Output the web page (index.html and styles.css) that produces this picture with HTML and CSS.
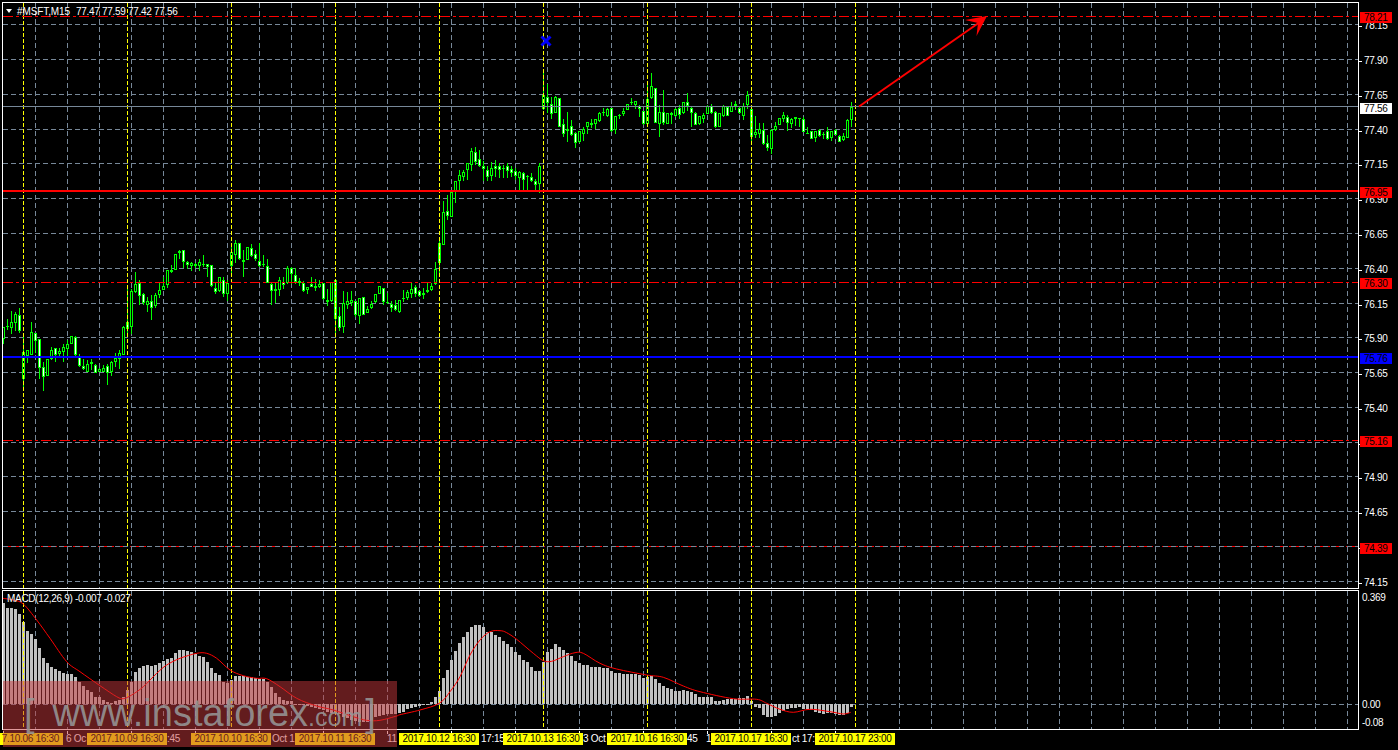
FILE: index.html
```html
<!DOCTYPE html>
<html lang="en">
<head>
<meta charset="utf-8">
<title>#MSFT,M15</title>
<link rel="stylesheet" href="styles.css">
</head>
<body>
<div class="terminal">
  <section class="pane pane-main">
    <svg id="main" class="plot" viewBox="3 3 1355 585" width="1355" height="585"></svg>
    <div class="title"><i class="caret"></i><span class="symbol">#MSFT,M15</span><span>77.47 77.59 77.42 77.56</span></div>
  </section>
  <aside class="axis">
    <span class="p" style="top:18px">78.15</span>
    <span class="p" style="top:53px">77.90</span>
    <span class="p" style="top:88px">77.65</span>
    <span class="p" style="top:123px">77.40</span>
    <span class="p" style="top:157px">77.15</span>
    <span class="p" style="top:192px">76.90</span>
    <span class="p" style="top:227px">76.65</span>
    <span class="p" style="top:262px">76.40</span>
    <span class="p" style="top:297px">76.15</span>
    <span class="p" style="top:331px">75.90</span>
    <span class="p" style="top:366px">75.65</span>
    <span class="p" style="top:401px">75.40</span>
    <span class="p" style="top:470px">74.90</span>
    <span class="p" style="top:505px">74.65</span>
    <span class="p" style="top:575px">74.15</span>
    <span class="tick" style="top:24px"></span>
    <span class="tick" style="top:442px"></span>
    <span class="tick" style="top:546px"></span>
    <span class="tag red" style="top:10px">78.21</span>
    <span class="tag white" style="top:101px">77.56</span>
    <span class="tag red" style="top:185px">76.95</span>
    <span class="tag red" style="top:276px">76.30</span>
    <span class="tag blue" style="top:351px">75.76</span>
    <span class="tag red" style="top:434px">75.16</span>
    <span class="tag red" style="top:541px">74.39</span>
  </aside>
  <section class="pane pane-macd">
    <svg id="macd" class="plot" viewBox="3 591 1355 138" width="1355" height="138"></svg>
    <div class="macd-title">MACD(12,26,9) -0.007 -0.027</div>
  </section>
  <aside class="axis">
    <span class="m" style="top:2px">0.369</span>
    <span class="m" style="top:109px">0.00</span>
    <span class="m" style="top:127px">-0.08</span>
  </aside>
  <footer class="time">
    <i class="mark-tick" style="left:3px"></i>
    <i class="mark-tick" style="left:67px"></i>
    <i class="mark-tick" style="left:131px"></i>
    <i class="mark-tick" style="left:195px"></i>
    <i class="mark-tick" style="left:259px"></i>
    <i class="mark-tick" style="left:323px"></i>
    <i class="mark-tick" style="left:387px"></i>
    <i class="mark-tick" style="left:451px"></i>
    <i class="mark-tick" style="left:515px"></i>
    <i class="mark-tick" style="left:579px"></i>
    <i class="mark-tick" style="left:643px"></i>
    <i class="mark-tick" style="left:707px"></i>
    <i class="mark-tick" style="left:771px"></i>
    <i class="mark-tick" style="left:835px"></i>
    <span class="t" style="left:66px">6 Oc</span>
    <span class="t" style="left:167px">:45</span>
    <span class="t" style="left:272px">Oct 1</span>
    <span class="t" style="left:387px">11</span>
    <span class="t" style="left:481px">17:15</span>
    <span class="t" style="left:583px">3 Oct</span>
    <span class="t" style="left:687px">45</span>
    <span class="t" style="left:706px">1</span>
    <span class="t" style="left:792px">ct 17:</span>
    <span class="v first">7.10.06 16:30</span>
    <span class="v" style="left:87px">2017.10.09 16:30</span>
    <span class="v" style="left:191px">2017.10.10 16:30</span>
    <span class="v" style="left:295px">2017.10.11 16:30</span>
    <span class="v" style="left:399px">2017.10.12 16:30</span>
    <span class="v" style="left:503px">2017.10.13 16:30</span>
    <span class="v" style="left:607px">2017.10.16 16:30</span>
    <span class="v" style="left:711px">2017.10.17 16:30</span>
    <span class="v" style="left:815px">2017.10.17 23:00</span>
  </footer>
  <div class="watermark">
    <span>[</span><span class="www">www.instaforex</span><span class="com">.com</span><span class="close">]</span>
  </div>
</div>
<script src="chart.js"></script>
</body>
</html>
```
FILE: styles.css
```css
* { box-sizing: border-box; }
html, body { margin: 0; height: 100%; background: #000; overflow: hidden; }
body {
  font-family: "Liberation Sans", Arial, sans-serif;
  font-size: 10px;
  letter-spacing: -.3px;
  color: #fff;
}
.terminal {
  position: relative;
  width: 1398px;
  height: 750px;
  padding: 2px 0 0 2px;
  display: grid;
  grid-template-columns: 1357px 39px;
  grid-template-rows: 587px 140px 1fr;
  row-gap: 1px;
  overflow: hidden;
}
.pane { position: relative; border: 1px solid #fff; overflow: hidden; }
.plot { display: block; shape-rendering: crispEdges; }
.axis { position: relative; }
.p, .m { position: absolute; height: 12px; line-height: 11px; white-space: nowrap; }
.tag { position: absolute; height: 11px; line-height: 11px; white-space: nowrap; }
.p { left: 5px; color: #fff; }
.p::before, .tick {
  content: "";
  position: absolute;
  width: 3px;
  height: 1px;
  background: #fff;
}
.p::before { left: -5px; top: 6px; }
.tick { left: 0; }
.m { left: 3px; color: #fff; }
.tag { left: 1px; width: 32px; padding-left: 4px; color: #000; }
.tag.red { background: #f00; }
.tag.white { background: #fff; }
.tag.blue { background: #00f; }
.title {
  position: absolute;
  left: 3px;
  top: 2px;
  display: flex;
  align-items: center;
  height: 12px;
  white-space: nowrap;
  color: #fff;
}
.caret {
  width: 0;
  height: 0;
  margin-right: 5px;
  border-left: 3.5px solid transparent;
  border-right: 3.5px solid transparent;
  border-top: 4px solid #fff;
}
.symbol { letter-spacing: -.1px; margin-right: 6px; }
.macd-title {
  position: absolute;
  left: 4px;
  top: 2px;
  height: 12px;
  line-height: 12px;
  white-space: nowrap;
  color: #fff;
}
.time { grid-column: 1 / -1; position: relative; margin-left: -2px; }
.t, .v { position: absolute; top: 2px; height: 12px; line-height: 12px; white-space: nowrap; }
.t { color: #fff; }
.mark-tick { position: absolute; top: 0; width: 1px; height: 3px; background: #fff; }
.v { width: 80px; text-align: center; background: #ff0; color: #000; }
.v.first { left: 0; width: 63px; text-align: right; padding-right: 4px; }
.watermark {
  position: absolute;
  left: 3px;
  top: 681px;
  width: 394px;
  height: 66px;
  padding: 13px 0 0 21px;
  display: flex;
  align-items: baseline;
  background: rgba(198, 56, 60, .5);
  color: rgba(150, 150, 150, .88);
  font-size: 38px;
  line-height: 38px;
  letter-spacing: 0;
}
.www { margin-left: 18px; }
.com { font-size: 25px; }
.close { margin-left: 3px; }
.grid { stroke: #778899; stroke-width: 1; stroke-dasharray: 5 3; fill: none; }
.yellow { stroke: #ff0; stroke-width: 1; stroke-dasharray: 4 2; fill: none; }
.dashdot { stroke: #f00; stroke-width: 1; stroke-dasharray: 10 3 3 3; fill: none; }
.solid-red { fill: #f00; }
.solid-blue { fill: #00f; }
.solid-gray { fill: #778899; }
.wick, .body { fill: #0f0; }
.in-w { fill: #fff; }
.in-b { fill: #000; }
.bar { fill: #c0c0c0; }
.signal { stroke: #f00; stroke-width: 1; fill: none; shape-rendering: auto; }
.arrow-line { stroke: #f00; stroke-width: 2; fill: none; shape-rendering: auto; }
.arrow-head { fill: #f00; shape-rendering: auto; }
.mark { stroke: #00f; stroke-width: 3; fill: none; shape-rendering: auto; }
```
FILE: chart.js
```js
(function () {
  // body top, body bottom, wick top, wick bottom, w/b — in crop units (1/3 px) from a base y
  var setA = "262,298,262,312,b 258,262,237,270,w 246,263,213,283,b 222,250,215,272,b 226,272,205,280,w 335,418,290,445,b 330,347,330,368,b 277,345,247,345,b 280,302,280,338,w 298,385,298,417,w 380,410,365,453,w 358,407,358,407,b 330,356,322,360,b 325,345,325,366,w 332,342,325,352,b 322,335,312,365,b 313,326,300,347,b 289,311,289,311,b 292,344,288,347,w 347,377,343,380,w 379,388,358,390,w 373,395,360,397,b 367,373,358,390,w 376,398,373,398,w 388,395,385,397,b 385,395,375,397,b 379,398,373,435,w 367,397,363,408,b 355,365,340,380,b 340,358,330,388,b 262,344,258,344,b 245,268,140,290,w 152,262,148,283,b 133,155,97,160,b 130,167,120,196,w 163,188,160,196,w 184,194,172,215,b 182,203,165,240,w 166,197,160,205,b 151,164,128,175,b 138,149,112,150,b 91,135,91,145,b 91,97,75,100,b 43,89,43,89,b 33,38,30,57,w 31,65,31,85,w 67,76,62,88,w 68,78,65,93,b 73,79,70,85,w 67,77,58,92,b 72,76,45,80,w 73,80,72,110,w 76,139,76,142,w 143,155,128,162,w 112,152,112,155,b 120,163,112,172,w 128,161,120,183,b 37,79,10,100,b 10,44,0,68,b 10,58,10,60,w";
  var setB = "360,365,330,410,w 322,360,322,360,b 324,347,312,350,w 343,358,330,362,w 363,377,310,380,w 372,375,345,380,w 377,430,357,430,w 433,452,425,495,w 448,452,430,488,w 421,450,412,468,b 427,434,410,448,w 385,430,378,432,b 385,401,380,432,w 406,425,385,432,w 423,430,415,438,w 430,452,422,457,w 442,449,442,462,b 432,441,410,442,w 438,443,418,453,b 432,441,420,443,b 430,476,430,480,w 481,485,447,497,w 427,482,427,485,b 420,536,420,590,w 529,563,500,572,w 488,560,453,578,b 484,495,455,508,b 480,488,453,497,b 484,525,484,530,w 475,527,475,552,b 472,524,472,526,w 508,518,498,520,b 493,505,483,507,b 462,487,462,490,b 439,461,439,463,b 443,486,443,494,w 487,489,458,492,w 492,503,482,516,w 496,509,480,512,w 481,516,481,518,b 475,478,450,487,b 455,473,450,480,b 447,461,430,475,b 442,461,435,470,w 454,467,450,472,w 459,464,445,478,w 451,455,430,458,w 438,449,430,452,b 388,433,365,435,b 310,368,300,405,w 217,314,183,314,b 214,227,165,240,w 155,230,150,232,b 124,152,124,190,b 106,122,90,150,b 97,110,90,122,b 70,90,68,120,b 34,76,25,92,b 37,65,22,75,w 58,77,30,82,w 79,88,62,122,w 91,112,78,122,w 85,108,67,122,b 77,86,60,110,w 79,89,70,115,w 85,87,75,115,w 79,92,68,115,w 86,98,78,110,w 92,109,85,120,w 97,113,93,150,b 100,120,95,150,w 109,112,105,150,w 112,122,98,125,w 124,134,118,150,w 77,131,68,160,b";
  var setC = "226,268,150,270,b 232,248,192,278,w 253,281,232,296,w 232,278,228,280,b 235,320,235,322,w 313,341,297,352,w 328,332,276,365,b 319,345,300,348,w 340,370,335,384,w 333,365,333,368,b 328,342,320,362,b 307,322,307,342,b 309,314,296,325,b 298,311,296,326,b 278,303,276,305,b 275,280,264,289,w 268,288,264,290,b 265,334,263,335,w 289,331,288,342,b 285,288,282,297,w 274,282,265,287,b 253,269,252,271,b 246,249,235,256,w 244,254,243,268,b 257,268,255,291,w 274,313,273,315,w 238,311,195,312,b 199,233,160,238,b 203,308,203,310,w 277,311,255,350,b 275,309,210,315,w 280,311,278,313,b 280,286,277,313,b 268,287,265,290,b 265,286,255,298,w 247,280,247,282,b 245,259,218,272,w 265,280,262,320,w 278,314,276,316,w 289,311,287,315,b 286,296,280,310,b 258,281,256,283,b 257,280,252,282,w 275,322,272,325,w 280,320,278,322,b 257,287,255,290,b 260,287,258,289,w 257,275,245,277,b 252,258,243,270,w 265,280,260,283,w 257,287,250,300,b 226,255,212,268,b 268,350,268,373,w 335,345,288,353,b 328,341,310,355,b 331,373,310,375,w 370,385,345,393,w 331,388,328,402,b 318,330,305,332,b 295,314,295,316,b 286,298,277,305,b 290,308,285,332,w 298,311,295,323,b 290,296,290,318,b 295,297,295,320,b 298,335,290,337,w 340,342,320,342,b 334,356,333,357,w 334,353,332,366,b 329,349,328,352,w 341,344,335,356,b 334,356,322,360,w 334,354,332,362,b 331,344,328,346,w 349,365,346,367,w 349,361,340,363,b 301,353,297,354,b 261,299,247,320,b";

  var barsA = [70,85,85,88,102,127,153,162,177,205,235,250,260,268,273,278,282,282,292,305,318,330,337,350,352,360,366,369,362,360,350,330,305,275,265,258,256,257,254,248,243,238,233,220,210,210,212,215,222,228,232,245,263,280,285,305,310,300,288,287,288,290,292,295,297,298,305,322,340,352,360,362,362,372,373,375,378,380,385,388,390,395,398,400,403,410,415,420,422,425,425,425,422,412,408,405,403,402,402,398];
  var barsB = [275,268,265,260,258,255,252,246,231,212,174,150,120,93,68,52,36,20,15,15,22,35,37,44,52,62,72,82,95,105,120,127,140,152,153,125,95,87,72,80,90,100,108,122,128,135,135,140,140,140,143,145,152,158,160,162,162,162,162,165,175,172,167,178,188,198,204,208,212,212,210,212,215,222,230,230,230,230,243,242,240,238,238,238,235,233,228,242,260,265,285,291,291,288,280,272,268,265,265,262,268,268,270,275,278,283,280,280,282,284,285,278,262];

  var sigA = [[8,55],[40,60],[70,72],[110,120],[150,175],[200,245],[240,275],[300,317],[350,350],[370,356],[395,345],[430,320],[470,280],[500,255],[540,235],[590,220],[620,220],[650,235],[690,270],[730,287],[770,295],[800,296],[840,320],[890,355],[950,378],[1000,390],[1060,410],[1100,421],[1140,421],[1190,408]];
  var sigB = [[0,284],[60,270],[118,250],[150,215],[180,170],[210,105],[240,60],[270,35],[300,32],[320,38],[350,58],[400,100],[430,122],[455,124],[490,110],[525,98],[550,100],[600,130],[650,147],[740,165],[790,172],[850,198],[900,215],[1000,236],[1070,238],[1100,250],[1140,268],[1180,277],[1230,268],[1290,275],[1330,282],[1352,277]];

  var gridY = [24,59,94,129,163,198,233,268,303,337,372,407,442,476,511,581];

  function vline(x, y1, y2, cls) {
    return '<line class="' + cls + '" x1="' + (x + .5) + '" x2="' + (x + .5) + '" y1="' + y1 + '" y2="' + y2 + '"/>';
  }
  function hline(y, x1, x2, cls) {
    return '<line class="' + cls + '" x1="' + x1 + '" x2="' + x2 + '" y1="' + (y + .5) + '" y2="' + (y + .5) + '"/>';
  }
  function rect(x, y, w, h, cls) {
    return '<rect class="' + cls + '" x="' + x + '" y="' + y + '" width="' + w + '" height="' + h + '"/>';
  }
  function verticals(y1, y2) {
    var s = '';
    for (var x = 35; x < 1358; x += 32) s += vline(x, y1, y2, 'grid');
    return s;
  }
  function yellows(y1, y2) {
    var s = '';
    for (var x = 23; x <= 855; x += 104) s += vline(x, y1, y2, 'yellow');
    return s;
  }
  function candles(set, base, first) {
    var s = '';
    set.split(' ').forEach(function (c, k) {
      var v = c.split(',');
      var x = 3 + 4 * (first + k);
      var t = Math.round(base + v[0] / 3), b = Math.round(base + v[1] / 3);
      var wt = Math.round(base + v[2] / 3), wb = Math.round(base + v[3] / 3);
      s += rect(x, wt, 1, Math.max(1, wb - wt), 'wick');
      var h = Math.max(1, b - t);
      s += rect(x - 1, t, 3, h, 'body');
      if (h > 2) s += rect(x, t + 1, 1, h - 2, v[4] === 'w' ? 'in-w' : 'in-b');
    });
    return s;
  }
  function bars() {
    var s = '', base = 704;
    function one(i, y) {
      var x = 3 + 4 * i - 1;
      if (y < base) s += rect(x, y, 3, base - y, 'bar');
      else s += rect(x, base, 3, Math.max(1, y - base), 'bar');
    }
    barsA.forEach(function (v, i) { one(i, Math.round(580 + v / 3)); });
    barsB.forEach(function (v, i) { one(i + 100, Math.round(620 + v / 3)); });
    return s;
  }
  function signal() {
    var pts = sigA.map(function (p) { return [p[0] / 3, 580 + p[1] / 3]; })
      .concat(sigB.map(function (p) { return [400 + p[0] / 3, 620 + p[1] / 3]; }));
    var d = 'M' + pts[0][0].toFixed(1) + ' ' + pts[0][1].toFixed(1);
    for (var i = 0; i < pts.length - 1; i++) {
      var p0 = pts[Math.max(0, i - 1)], p1 = pts[i], p2 = pts[i + 1], p3 = pts[Math.min(pts.length - 1, i + 2)];
      d += ' C' + (p1[0] + (p2[0] - p0[0]) / 6).toFixed(1) + ' ' + (p1[1] + (p2[1] - p0[1]) / 6).toFixed(1) +
        ' ' + (p2[0] - (p3[0] - p1[0]) / 6).toFixed(1) + ' ' + (p2[1] - (p3[1] - p1[1]) / 6).toFixed(1) +
        ' ' + p2[0].toFixed(1) + ' ' + p2[1].toFixed(1);
    }
    return '<path class="signal" d="' + d + '"/>';
  }

  var m = verticals(3, 588);
  gridY.forEach(function (y) { m += hline(y, 3, 1358, 'grid'); });
  m += candles(setA, 240, 0) + candles(setB, 140, 60) + candles(setC, 20, 135);
  m += yellows(3, 588);
  m += hline(16, 3, 1358, 'dashdot');
  m += rect(3, 106, 1355, 1, 'solid-gray');
  m += rect(3, 190, 1355, 2, 'solid-red');
  m += hline(282, 3, 1358, 'dashdot');
  m += rect(3, 356, 1355, 2, 'solid-blue');
  m += hline(440, 3, 1358, 'dashdot');
  m += hline(546, 3, 1358, 'dashdot');
  m += hline(546, 3, 1358, 'grid');
  m += '<line class="mark" x1="541.5" y1="45.5" x2="550.5" y2="36.5"/><line class="mark" x1="541.5" y1="36.5" x2="550.5" y2="45.5"/>';
  m += '<line class="arrow-line" x1="859" y1="106.5" x2="980" y2="22"/>';
  m += '<polygon class="arrow-head" points="987,16 965,20 978,23 976.5,36"/>';
  document.getElementById('main').innerHTML = m;

  var d = verticals(591, 729);
  d += hline(704, 3, 1358, 'grid');
  d += bars();
  d += yellows(591, 729);
  d += signal();
  document.getElementById('macd').innerHTML = d;
})();
```
